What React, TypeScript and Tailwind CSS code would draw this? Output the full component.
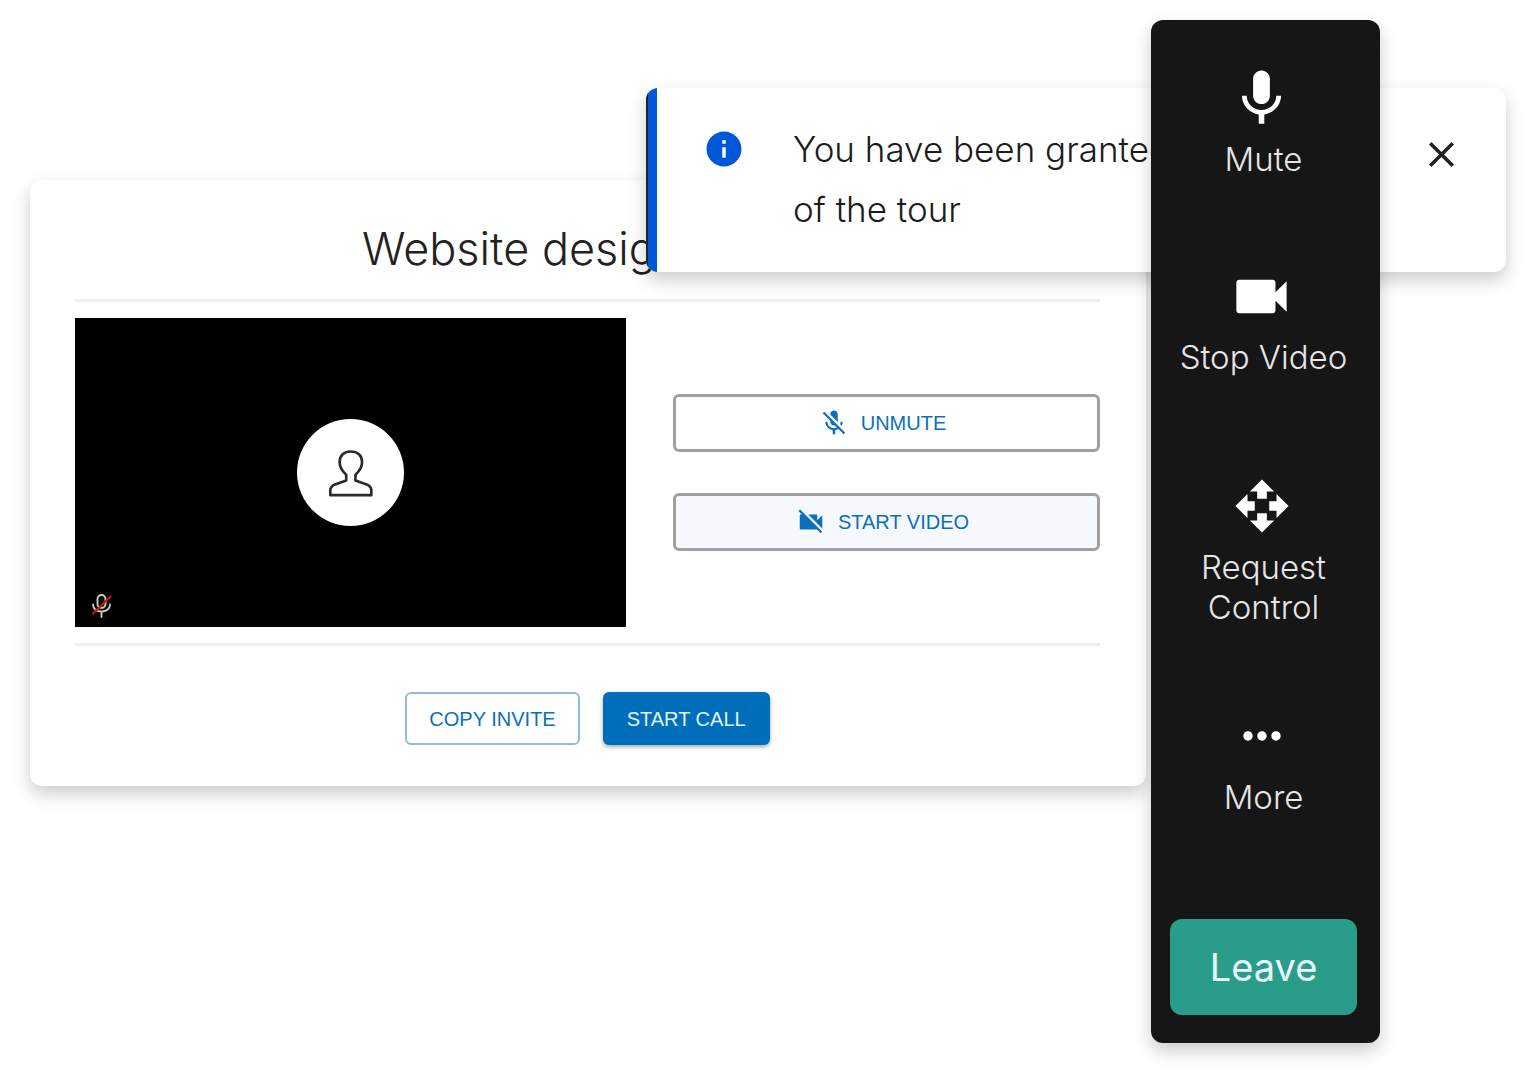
import {
  MdClose,
  MdInfo,
  MdMic,
  MdMicOff,
  MdMoreHoriz,
  MdOpenWith,
  MdVideocam,
  MdVideocamOff,
} from 'react-icons/md'

const TOOLS = [
  { label: 'Mute', icon: MdMic, size: 67, className: '' },
  { label: 'Stop Video', icon: MdVideocam, size: 67, className: 'mt-[83px]' },
  { label: 'Request Control', icon: MdOpenWith, size: 58, className: 'mt-[95px]' },
  { label: 'More', icon: MdMoreHoriz, size: 56, className: 'mt-[75px]' },
]

function PersonIcon() {
  return (
    <svg width="47" height="50" viewBox="170 142 142 150" fill="none" stroke="#2b2b2b" strokeWidth="8">
      <path
        strokeLinejoin="round"
        d="M228 222C213 209 208 198 208 184C208 164 222 152 242 152C262 152 276 164 276 184C276 198 271 209 256 222V240L290 252C300 256 304 262 304 270V284H180V270C180 262 184 256 194 252L228 240Z"
      />
    </svg>
  )
}

function MutedBadge() {
  return (
    <svg
      className="absolute bottom-2 left-4"
      width="22"
      height="26"
      viewBox="0 0 22 26"
      fill="none"
      stroke="#c9c9c9"
      strokeWidth="1.9"
      strokeLinecap="round"
    >
      <rect x="6.5" y="2" width="8" height="13" rx="4" />
      <path d="M2 11.5C2 16 6 18.5 10.5 18.5S19 16 19 11.5M10.5 18.5V24" />
      <path d="M2 20.5L19.5 3.5" stroke="#c5161d" strokeWidth="2.2" />
    </svg>
  )
}

function CallCard() {
  return (
    <section className="mt-40 min-w-0 flex-1 rounded-xl bg-white pt-[35px] pr-[46px] pb-[41px] pl-[45px] font-['Liberation_Sans',sans-serif] shadow-[0_8px_18px_rgba(0,0,0,0.2)]">
      <h1 className="pl-[287px] font-['Inter',sans-serif] text-[45px] leading-[68px] font-light whitespace-nowrap text-[#222]">
        Website design
      </h1>
      <hr className="mt-4 border-t-3 border-[#efefef]" />

      <div className="mt-4 grid grid-cols-[551fr_427fr] items-center gap-[47px]">
        <div className="relative flex aspect-[551/309] items-center justify-center bg-black">
          <div className="flex size-[107px] items-center justify-center rounded-full bg-white">
            <PersonIcon />
          </div>
          <MutedBadge />
        </div>
        <div className="flex flex-col gap-[41px] text-xl text-[#0b70bb]">
          <button className="flex h-[58px] items-center justify-center gap-3 rounded-md border-3 border-[#a0a0a0] pr-2">
            <MdMicOff size={30} />
            UNMUTE
          </button>
          <button className="flex h-[58px] items-center justify-center gap-3 rounded-md border-3 border-[#a0a0a0] bg-[#f5f9fd] pr-2">
            <MdVideocamOff size={30} />
            START VIDEO
          </button>
        </div>
      </div>

      <hr className="mt-4 border-t-3 border-[#efefef]" />
      <div className="mt-[46px] flex justify-center gap-[23px] text-xl">
        <button className="h-[53px] rounded-md border-2 border-[#8dbce0] px-[22px] text-[#0b70bb]">COPY INVITE</button>
        <button className="h-[53px] rounded-md bg-[#006fbb] px-6 text-[#e4f2fb] shadow-[0_2px_4px_rgba(0,0,0,0.35)]">
          START CALL
        </button>
      </div>
    </section>
  )
}

function Toast() {
  return (
    <div
      role="status"
      className="absolute top-[88px] right-[30px] flex h-[184px] w-[860px] overflow-hidden rounded-xl bg-white shadow-[0_8px_18px_rgba(0,0,0,0.2)]"
    >
      <div className="w-[11px] shrink-0 border-l-2 border-[#20242b] bg-[#0058d8]" />
      <MdInfo size={42} className="mt-10 ml-[46px] shrink-0 text-[#0058d8]" />
      <p className="ml-12 flex-1 pt-[31px] text-[35px] leading-[60px] font-light whitespace-nowrap text-[#1c1c1c]">
        You have been granted
        <br />
        of the tour
      </p>
      <button aria-label="Close" className="mt-11 mr-[43px] h-11 text-[#222]">
        <MdClose size={43} />
      </button>
    </div>
  )
}

function Toolbar() {
  return (
    <aside className="relative z-10 flex w-[229px] shrink-0 flex-col rounded-xl bg-[#161616] pt-11 pr-[23px] pb-7 pl-[19px] shadow-[0_8px_18px_rgba(0,0,0,0.2)]">
      {TOOLS.map(({ label, icon: Icon, size, className }) => (
        <button key={label} className={`flex flex-col items-center gap-[7px] ${className}`}>
          <span className="flex h-[68px] items-center pr-1 text-white">
            <Icon size={size} />
          </span>
          <span className="text-[33px] leading-10 font-light text-[#e6e6e6]">{label}</span>
        </button>
      ))}
      <button className="mt-[102px] h-24 rounded-xl bg-[#2a9d8a] text-[38px] text-[#e8f6fb]">Leave</button>
    </aside>
  )
}

export default function App() {
  return (
    <main className="relative flex min-h-screen items-start gap-[5px] bg-white pt-5 pr-[156px] pb-10 pl-[30px] font-['Inter',sans-serif]">
      <CallCard />
      <Toast />
      <Toolbar />
    </main>
  )
}
